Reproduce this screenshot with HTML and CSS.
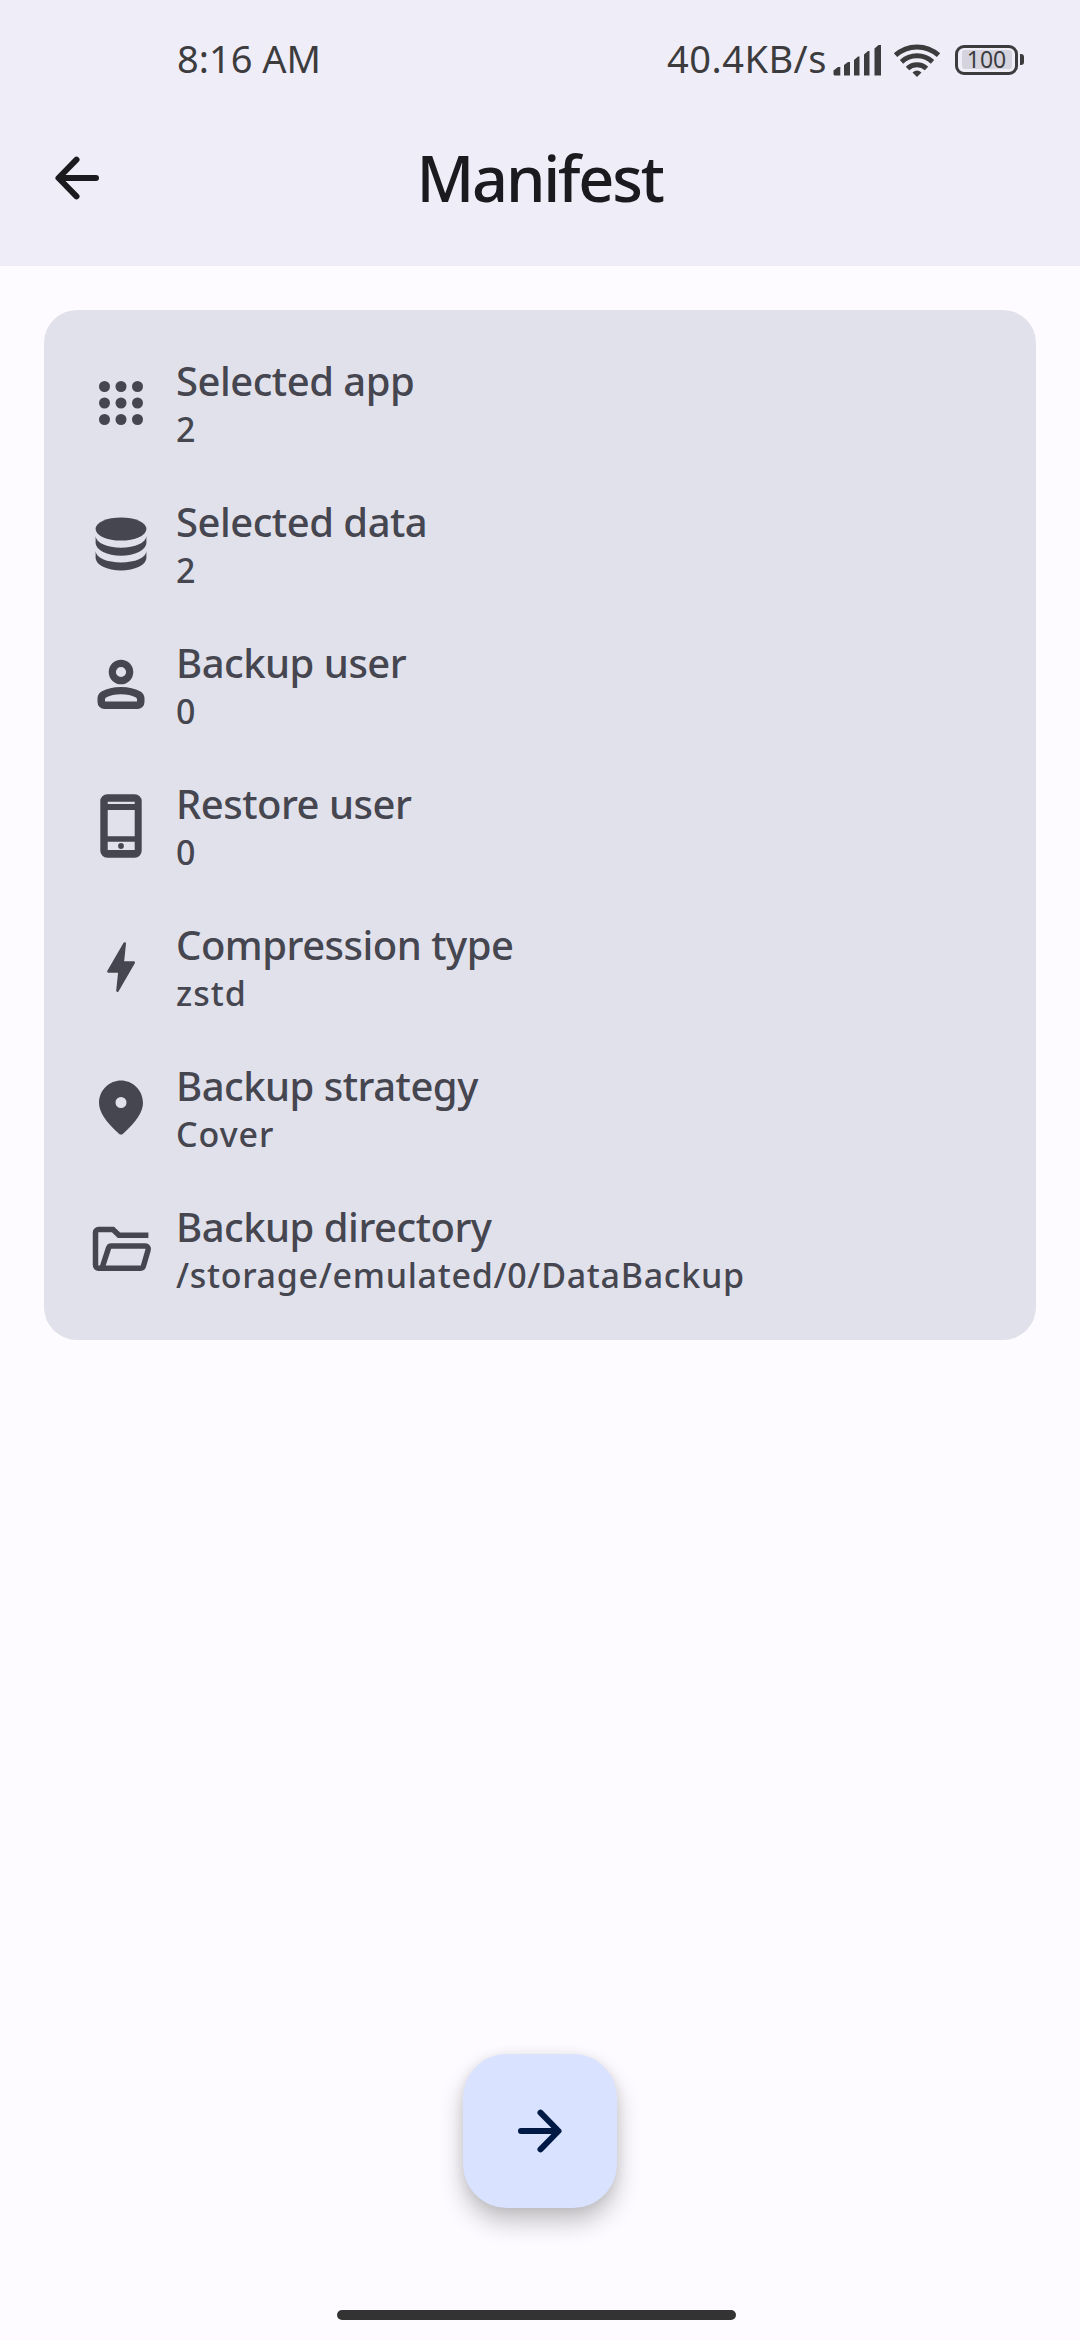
FILE: index.html
```html
<!DOCTYPE html>
<html lang="en">
<head>
<meta charset="utf-8">
<title>Manifest</title>
<link rel="stylesheet" href="styles.css">
</head>
<body>
<div class="screen">
  <header class="header">
    <div class="status">
      <span class="clock">8:16 AM</span>
      <div class="indicators">
        <span class="speed">40.4KB/s</span>
        <svg class="signal" viewBox="0 0 48 32" width="48" height="32"><path d="M.5 30.500v-4L5 23h2.300v8.500H1.500zM11 31.500V21l4-3h2v13.500zM21 31.500V16l4-3.500h1.500v19zM31 31.500V10.500l4-3.500h1.500v24.500zM41.500 31.500V4.500l4-3.500H48v30.500z"/></svg>
        <svg class="wifi" viewBox="0 0 48 34" width="48" height="34"><g fill="none" stroke="currentColor" stroke-width="5"><path d="M2.500 12.200a32 32 0 0 1 43 0"/><path d="M8.500 18.800a23 23 0 0 1 31 0"/><path d="M14.500 25.500a14 14 0 0 1 19 0"/></g><path d="M24 34l-4.500-4.500q4.500-4 9 0z"/></svg>
        <div class="battery"><div class="cell"><span class="level">100</span></div><i class="nub"></i></div>
      </div>
    </div>
    <div class="toolbar">
      <svg class="arrow" viewBox="0 0 66 66" width="66" height="66"><path d="M52 33H17M32.500 14.700L14.500 33l18 18.300"/></svg>
      <h1 class="title">Manifest</h1>
    </div>
  </header>
  <main class="content">
    <section class="card">
      <div class="row">
        <svg class="icon" viewBox="0 0 66 66"><circle cx="16.500" cy="16.500" r="5.500"/><circle cx="33" cy="16.500" r="5.500"/><circle cx="49.500" cy="16.500" r="5.500"/><circle cx="16.500" cy="33" r="5.500"/><circle cx="33" cy="33" r="5.500"/><circle cx="49.500" cy="33" r="5.500"/><circle cx="16.500" cy="49.500" r="5.500"/><circle cx="33" cy="49.500" r="5.500"/><circle cx="49.500" cy="49.500" r="5.500"/></svg>
        <div class="text"><span class="label">Selected app</span><span class="value">2</span></div>
      </div>
      <div class="row">
        <svg class="icon" viewBox="0 0 66 66"><ellipse cx="33" cy="18" rx="25.400" ry="11.600"/><path d="M7.600 25A25.400 11.700 0 0 0 58.400 25V32A25.400 12.700 0 0 1 7.600 32zM7.600 40A25.400 11.500 0 0 0 58.400 40V47A25.400 12.400 0 0 1 7.600 47z"/></svg>
        <div class="text"><span class="label">Selected data</span><span class="value">2</span></div>
      </div>
      <div class="row">
        <svg class="icon" viewBox="0 0 66 66"><circle cx="33" cy="20" r="8.700" fill="none" stroke="currentColor" stroke-width="7.200"/><path fill-rule="evenodd" d="M33 35c8 0 14 1.700 19 4.300 2.800 1.500 4.500 4 4.500 7.200V50a7 7 0 0 1-7 7h-33a7 7 0 0 1-7-7v-3.500c0-3.200 1.700-5.700 4.500-7.200C19 36.700 25 35 33 35zm0 7.200c-6.200 0-10.500 1-14.500 3-1 .5-1.500 1.200-1.500 2.200v2.100h32v-2.100c0-1-.5-1.700-1.500-2.200-4-2-8.300-3-14.500-3z"/></svg>
        <div class="text"><span class="label">Backup user</span><span class="value">0</span></div>
      </div>
      <div class="row">
        <svg class="icon" viewBox="0 0 66 66"><path fill-rule="evenodd" d="M19.300 1.200h27.400a7 7 0 0 1 7 7v49.500a7 7 0 0 1-7 7H19.300a7 7 0 0 1-7-7V8.200a7 7 0 0 1 7-7zM19.700 8.700V11h27V8.700zM19.700 17v26.300h27V17zM19.700 48.700V57h27v-8.300z"/><circle cx="33" cy="53" r="2.900"/></svg>
        <div class="text"><span class="label">Restore user</span><span class="value">0</span></div>
      </div>
      <div class="row">
        <svg class="icon" viewBox="0 0 66 66"><path stroke="currentColor" stroke-width="2.600" stroke-linejoin="round" d="M36.700 9.500L34.700 28.500H45.700L29.500 56.700 31.500 37.500H20.500z"/></svg>
        <div class="text"><span class="label">Compression type</span><span class="value">zstd</span></div>
      </div>
      <div class="row">
        <svg class="icon" viewBox="0 0 24 24"><path d="M12 2C8 2 4 5.220 4 10.200c0 3.180 2.450 6.920 7.340 11.230.38.33.95.33 1.330 0C17.550 17.120 20 13.380 20 10.200 20 5.220 16 2 12 2zm0 10a2 2 0 1 1 0-4 2 2 0 0 1 0 4z"/></svg>
        <div class="text"><span class="label">Backup strategy</span><span class="value">Cover</span></div>
      </div>
      <div class="row">
        <svg class="icon" viewBox="0 0 66 66"><path fill="none" stroke="currentColor" stroke-width="5.500" d="M60.400 19.200H31l-6-5.700H10.500a3 3 0 0 0-3 3V49a3 3 0 0 0 3 3.200H52.500a3 3 0 0 0 3-2.400l4.600-15.800a3 3 0 0 0-3-4H23.500a3 3 0 0 0-3 2.200L14 52"/></svg>
        <div class="text"><span class="label">Backup directory</span><span class="value path">/storage/emulated/0/DataBackup</span></div>
      </div>
    </section>
  </main>
  <footer class="footer">
    <button class="fab" aria-label="Next"><svg class="arrow" viewBox="0 0 66 66" width="66" height="66"><path d="M14 33h35M33.500 14.700l18 18.300-18 18.300"/></svg></button>
    <div class="home"></div>
  </footer>
</div>
</body>
</html>
```
FILE: styles.css
```css
* { box-sizing: border-box; }
body {
  margin: 0;
  background: #fdfbff;
  font-family: "Noto Sans", "Open Sans", sans-serif;
  color: #45464f;
}
.screen { width: 1080px; height: 2340px; display: flex; flex-direction: column; }
.header { height: 266px; background: #efedf7; }
.status {
  height: 119px;
  padding: 0 56px 0 177px;
  display: flex;
  align-items: center;
  justify-content: space-between;
  color: #3c3c3e;
  font-size: 38px;
  line-height: 50px;
  font-weight: 450;
}
.status svg { fill: currentColor; flex: none; }
.clock, .speed { padding-bottom: 3px; }
.indicators { display: flex; align-items: center; }
.speed { width: 166px; letter-spacing: 0.500px; white-space: nowrap; }
.signal { margin-right: 12px; }
.wifi { margin-right: 14px; }
.battery { display: flex; align-items: center; gap: 2px; }
.cell {
  width: 63px;
  height: 30px;
  padding: 2.500px 3.500px;
  border: 3.500px solid #3c3c3e;
  border-radius: 9px;
  display: flex;
}
.level {
  flex: 1;
  background: #d5d4de;
  border-radius: 3px;
  font-size: 23px;
  line-height: 18px;
  text-align: center;
}
.nub { width: 4px; height: 11px; background: #3c3c3e; border-radius: 0 3px 3px 0; }
.toolbar { height: 118px; padding-left: 44px; display: flex; align-items: center; }
.arrow { fill: none; stroke: #1b1b1f; stroke-width: 6; stroke-linecap: round; stroke-linejoin: round; }
.title {
  flex: 1;
  margin: 0;
  padding-right: 111px;
  text-align: center;
  font-size: 63px;
  line-height: 84px;
  font-weight: 500;
  letter-spacing: -2.200px;
  color: #1b1b1f;
}
.content { flex: 1; padding: 44px; }
.card { height: 1030px; padding: 22px 44px; border-radius: 33px; background: #e1e1eb; }
.row { height: 141px; display: flex; align-items: center; gap: 22px; }
.icon { width: 66px; height: 66px; flex: none; fill: currentColor; }
.text { display: flex; flex-direction: column; padding-top: 1px; font-weight: 500; white-space: nowrap; }
.label { font-size: 40px; line-height: 50px; letter-spacing: -0.500px; }
.value { font-size: 34px; line-height: 44px; letter-spacing: 1px; padding-top: 1px; }
.path { letter-spacing: 0.700px; }
.footer { display: flex; flex-direction: column; align-items: center; padding-bottom: 20px; }
.fab {
  width: 154px;
  height: 154px;
  margin: 0 0 102px;
  padding: 0;
  border: 0;
  border-radius: 44px;
  background: #d9e2ff;
  display: flex;
  align-items: center;
  justify-content: center;
  box-shadow: 0 14px 24px rgba(0, 0, 0, 0.230), 0 1px 12px rgba(0, 0, 0, 0.080);
}
.fab .arrow { stroke: #001945; }
.home { width: 399px; height: 10px; margin-right: 7px; border-radius: 5px; background: #333; }
```
